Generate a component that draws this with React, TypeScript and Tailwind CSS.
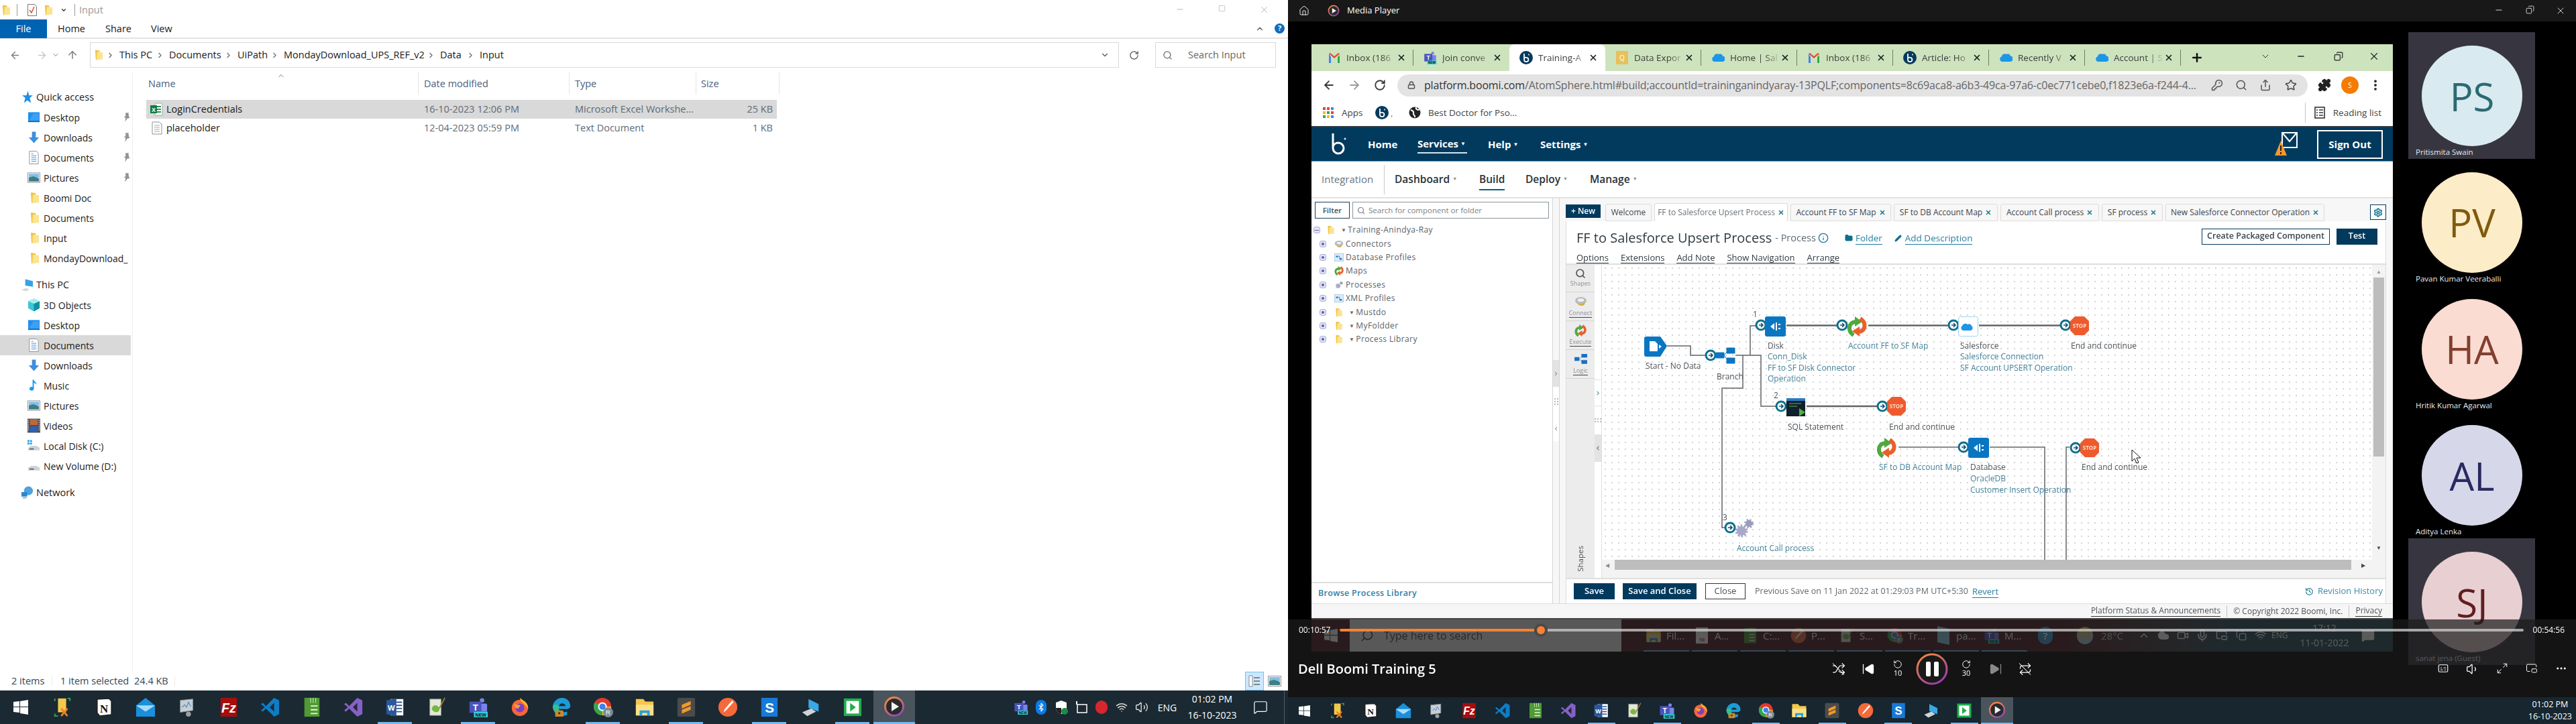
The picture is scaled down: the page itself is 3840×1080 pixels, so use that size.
import React from 'react';
import {
  ArrowLeft, ArrowRight, ArrowUp, Bluetooth, ChevronDown, ChevronLeft, ChevronRight, ChevronUp, Cloud, Copy, Ellipsis,
  EllipsisVertical, Folder, History, House, Info, KeyRound, Lock, Maximize2, MessageSquare, Mic, Minus, Pencil,
  PictureInPicture2, Plus, Puzzle, Repeat, RotateCcw, RotateCw, Search, Settings, Share, Shuffle, SkipBack, SkipForward,
  Square, Star, Subtitles, Video, Volume1, Volume2, Wifi, X,
} from 'lucide-react';

type IconProps = { className?: string };

/* ---------- shared little drawings ---------- */

const TreeFolder = ({ className }: IconProps) => (
  <svg viewBox="0 0 14 18" className={className}>
    <path d="M1 1 L8 2 V16 L2 17Z" fill="#f2c23e" />
    <path d="M4 4 L13 5 V16 L3 17Z" fill="#fbe391" />
  </svg>
);

const BoomiB = ({ className }: IconProps) => (
  <svg viewBox="0 0 20 20" className={className}>
    <circle cx="10" cy="10" r="10" fill="#033a5e" />
    <path d="M7 4v9a3.2 3.2 0 1 0 3.2-3.2A3.2 3.2 0 0 0 7 11" fill="none" stroke="#fff" strokeWidth="1.8" />
    <circle cx="14" cy="5.5" r="1" fill="#fff" />
  </svg>
);

const SfCloud = ({ className }: IconProps) => (
  <svg viewBox="0 0 20 16" className={className}>
    <path d="M5 14a4 4 0 0 1-1-7.8A4.5 4.5 0 0 1 11 3a4 4 0 0 1 6 2.4A4.3 4.3 0 0 1 16 14Z" fill="#1b96e8" />
  </svg>
);

const Gmail = ({ className }: IconProps) => (
  <svg viewBox="0 0 20 18" className={className}>
    <path d="M2 3v14h3V8z" fill="#3f83f0" />
    <path d="M15 8v9h3V3z" fill="#2fa853" />
    <path d="M2 3l8 7 8-7-2-1-6 5-6-5z" fill="#e84335" />
    <path d="M18 3l-3 5 3-2z" fill="#f7bb14" />
  </svg>
);

const MediaLogo = ({ className, id }: IconProps & { id: string }) => (
  <svg viewBox="0 0 32 32" className={className}>
    <defs>
      <linearGradient id={id} x1="0.2" y1="0" x2="0.8" y2="1">
        <stop offset="0" stopColor="#f5893a" />
        <stop offset="1" stopColor="#8b4bb8" />
      </linearGradient>
    </defs>
    <circle cx="16" cy="16" r="13.5" fill="#2a2a2e" stroke={`url(#${id})`} strokeWidth="3" />
    <path d="M12 9l11 7-11 7z" fill="#f2f2f2" />
  </svg>
);

/* swirl used for map shapes, drawn in a 30x30 box */
const MapNode = ({ x, y }: { x: number; y: number }) => (
  <g transform={`translate(${x} ${y})`}>
    <path d="M10 28C1 22 2 9 13 8" fill="none" stroke="#4fa83d" strokeWidth="6" />
    <path d="M12 0l11 8-11 7z" fill="#4fa83d" />
    <path d="M20 3c9 6 9 18-2 20" fill="none" stroke="#ea5f2b" strokeWidth="6" />
    <path d="M19 30L8 22l11-7z" fill="#ea5f2b" />
  </g>
);

const MapMini = ({ className }: IconProps) => (
  <svg viewBox="0 0 30 30" className={className}>
    <MapNode x={0} y={0} />
  </svg>
);

const PlugMini = ({ className }: IconProps) => (
  <svg viewBox="0 0 20 16" className={className}>
    <ellipse cx="10" cy="7" rx="9" ry="6" fill="#b8bcc0" />
    <path d="M4 9c3 5 9 5 13-1-1 6-2 7-6 7s-6-2-7-6z" fill="#d8ae3c" />
    <ellipse cx="10" cy="6" rx="5" ry="2.5" fill="#f0f0f0" />
  </svg>
);

const GearsMini = ({ className }: IconProps) => (
  <svg viewBox="0 0 20 16" className={className}>
    <circle cx="8" cy="10" r="4" fill="#a8a9c8" stroke="#a8a9c8" strokeWidth="3" strokeDasharray="1.6 1.2" />
    <circle cx="15" cy="4" r="2.5" fill="#9a9bbd" stroke="#9a9bbd" strokeWidth="2" strokeDasharray="1.3 1" />
  </svg>
);

const ProfileMini = ({ className }: IconProps) => (
  <svg viewBox="0 0 16 16" className={className}>
    <rect x="0.5" y="1.5" width="15" height="13" fill="#dcecf8" stroke="#a5c8e4" />
    <path d="M3 5h3v3H3zM9 9h4v3H9z" fill="#2f7fc0" />
    <path d="M6 6h3v4" fill="none" stroke="#2f7fc0" />
  </svg>
);

const LogicMini = ({ className }: IconProps) => (
  <svg viewBox="0 0 30 24" className={className}>
    <path d="M0 8h11v8H0zM17 0h13v8H17zM17 15h13v8H17zM11 12l7-7M11 12l7 7" fill="#1c6fc0" stroke="#1c6fc0" />
  </svg>
);

/* ---------- taskbar app icons, same order in both taskbars ---------- */

const appIcons: React.ReactNode[] = [
  <g key="db">
    <path d="M9 2h13v22H9z" fill="#f2c94c" />
    <path d="M4 26v4h5M28 6V2h-4M4 6V2" fill="none" stroke="#2fa84f" strokeWidth="2" />
    <path d="M14 30l10-12M24 30L14 18" stroke="#f08020" strokeWidth="3" />
  </g>,
  <g key="notion">
    <path d="M5 3l19-1 4 4v22l-19 2-4-5z" fill="#fff" stroke="#222" strokeWidth="2" />
    <text x="16" y="24" textAnchor="middle" fontSize="18" fontFamily="Liberation Serif" fontWeight="700" fill="#111">N</text>
  </g>,
  <g key="mail">
    <path d="M16 1L31 13v18H1V13z" fill="#1a8fdc" />
    <path d="M1 13h30L16 23z" fill="#a6def7" />
  </g>,
  <g key="perf">
    <path d="M5 5l20-2v18l-20 3z" fill="#c9ced3" stroke="#8b9096" />
    <path d="M8 16l4-4 3 4 3-8 4 7" fill="none" stroke="#4b90d0" strokeWidth="1.3" />
    <circle cx="18" cy="27" r="4" fill="#9aa0a6" />
  </g>,
  <g key="fz">
    <rect x="3" y="1" width="26" height="30" fill="#a80d0d" />
    <text x="16" y="24" textAnchor="middle" fontSize="21" fontFamily="Liberation Sans" fontStyle="italic" fontWeight="700" fill="#fff">Fz</text>
  </g>,
  <g key="vscode">
    <path d="M22 1l8 4v22l-8 4L9 18l-5 5-3-2 6-5-6-5 3-2 5 5z" fill="#0f7cc7" />
    <path d="M22 9l-7 7 7 7z" fill="#1f2b35" />
  </g>,
  <g key="note">
    <rect x="4" y="1" width="24" height="30" fill="#4f9a34" />
    <path d="M14 1v8M18 1v8M22 1v8" stroke="#dff0d0" />
    <path d="M14 14h11M14 20h11M14 26h11" stroke="#e8f5dc" strokeWidth="2" />
  </g>,
  <g key="vs">
    <path d="M22 1l8 4v22l-8 4L9 18l-5 5-3-2 6-5-6-5 3-2 5 5z" fill="#8661c5" />
    <path d="M22 9l-7 7 7 7z" fill="#1f2b35" />
  </g>,
  <g key="word">
    <rect x="9" y="3" width="20" height="26" fill="#fff" />
    <path d="M18 8h9M18 13h9M18 18h9M18 23h9" stroke="#2b579a" strokeWidth="2" />
    <path d="M2 5l16-3v28L2 27z" fill="#2b579a" />
    <text x="10" y="21" textAnchor="middle" fontSize="12" fontFamily="Liberation Sans" fontWeight="700" fill="#fff">W</text>
  </g>,
  <g key="npp">
    <path d="M5 3h18v26H5z" fill="#e3e8d8" stroke="#8a8f80" />
    <path d="M8 18c2-7 10-7 12 0s-10 8-12 0z" fill="#74b840" />
    <path d="M29 1L20 18" stroke="#a07830" strokeWidth="2" />
  </g>,
  <g key="teams">
    <circle cx="22" cy="5" r="3.5" fill="#7b83eb" />
    <rect x="18" y="10" width="12" height="13" rx="2" fill="#7b83eb" />
    <rect x="2" y="7" width="19" height="18" fill="#4b53bc" />
    <text x="11.5" y="21" textAnchor="middle" fontSize="14" fontFamily="Liberation Sans" fontWeight="700" fill="#fff">T</text>
    <rect x="9" y="23" width="22" height="9" fill="#35d0d6" />
    <text x="20" y="30.5" textAnchor="middle" fontSize="7.5" fontFamily="Liberation Sans" fontWeight="700" fill="#111">NEW</text>
  </g>,
  <g key="firefox">
    <circle cx="16" cy="17" r="13" fill="#f5663a" />
    <path d="M16 1c8 6 14 10 13 18-4-8-9-9-12-14z" fill="#fbb32e" />
    <circle cx="16" cy="17" r="7" fill="#7a3fc4" />
    <path d="M7 10c3 3 6 1 10 3l-4 5c-4 0-6-3-6-8z" fill="#f8a02c" />
  </g>,
  <g key="edge">
    <path d="M2 15C3 6 10 1 17 1c8 0 13 6 13 13 0 3-3 5-7 5H12c1 4 7 6 13 4v5c-9 4-22 1-23-13z" fill="#1d9bd6" />
    <path d="M12 14c1-5 8-6 11 0z" fill="#1f2b35" />
    <path d="M2 15c1 9 9 15 17 14-7-3-9-10-7-15-4-3-8-3-10 1z" fill="#30c48d" />
    <rect x="6" y="21" width="13" height="10" rx="1" fill="#c98a2b" />
    <rect x="11" y="24" width="3" height="3" fill="#3a2a10" />
  </g>,
  <g key="chrome">
    <circle cx="15" cy="15" r="14" fill="#e5382c" />
    <path d="M15 15L3 8A14 14 0 0 0 15 29z" fill="#2fa853" />
    <path d="M15 15h14A14 14 0 0 1 15 29z" fill="#fbc116" />
    <circle cx="15" cy="15" r="7" fill="#fff" />
    <circle cx="15" cy="15" r="5" fill="#3b82f0" />
    <circle cx="24" cy="24" r="8" fill="#7f8b93" />
    <text x="24" y="28" textAnchor="middle" fontSize="10" fontFamily="Liberation Sans" fill="#fff">R</text>
  </g>,
  <g key="explorer">
    <path d="M2 3h12l3 4h13v22H2z" fill="#f6c64a" />
    <path d="M2 12h28v17H2z" fill="#fbe08a" />
    <path d="M8 21h16v8h-4v-4h-8v4H8z" fill="#2b9fe0" />
  </g>,
  <g key="sublime">
    <rect x="2" y="1" width="28" height="30" rx="3" fill="#4b4b4b" />
    <path d="M23 6L9 12v6l14-6zM9 20l14-6v6L9 26z" fill="#f09a2a" />
  </g>,
  <g key="postman">
    <circle cx="16" cy="16" r="15" fill="#f5693a" />
    <path d="M23 5L11 19l2 2L25 8zM11 19l-2 5 4-3" fill="#fff" />
  </g>,
  <g key="snap">
    <rect x="3" y="1" width="26" height="30" fill="#1779d8" />
    <text x="16" y="24" textAnchor="middle" fontSize="22" fontFamily="Liberation Sans" fontWeight="700" fill="#fff">S</text>
  </g>,
  <g key="rdp">
    <path d="M12 3l16 8v12l-16-6z" fill="#38a9e6" />
    <path d="M2 24l14-6 8 5-14 7z" fill="#cfd3d6" />
  </g>,
  <g key="green">
    <rect x="2" y="2" width="28" height="28" fill="#1fae4b" />
    <rect x="6" y="6" width="20" height="20" fill="#fff" />
    <path d="M12 9l9 7-9 7z" fill="#1fae4b" />
  </g>,
];

/* window pane logo, then the apps above, then the media player */
const WinLogo = ({ className }: IconProps) => (
  <svg viewBox="0 0 22 22" className={className}>
    <path d="M0 3l9-1v8H0zM10 2l12-2v10H10zM0 11h9v8l-9-1zM10 11h12v11l-12-2z" fill="#fff" />
  </svg>
);

/* ---------- left half: file explorer ---------- */

const Pane = ({ color }: { color: string }) => (
  <svg viewBox="0 0 20 20" className="h-[20px] w-[20px]">
    <rect x="1" y="2" width="18" height="15" fill={color} />
    <path d="M3 15L9 4h9v11z" fill="#fff" opacity="0.15" />
    <rect x="1" y="16" width="18" height="1.5" fill="#0b5fa8" />
  </svg>
);
const DownArrow = () => (
  <svg viewBox="0 0 20 20" className="h-[20px] w-[20px]">
    <path d="M7 1h6v9h5l-8 9-8-9h5z" fill="#3d8fe0" />
  </svg>
);
const DocIcon = () => (
  <svg viewBox="0 0 20 20" className="h-[20px] w-[20px]">
    <path d="M3 0h11l3 3v17H3z" fill="#fff" stroke="#8d9299" />
    <path d="M6 4h3M6 7h8M6 10h8M6 13h8M6 16h8" stroke="#3d8fe0" />
  </svg>
);
const PicIcon = () => (
  <svg viewBox="0 0 20 20" className="h-[20px] w-[20px]">
    <rect x="0.5" y="2.5" width="19" height="15" fill="#fff" stroke="#8d9299" />
    <rect x="2" y="4" width="16" height="6" fill="#7fc0ea" />
    <path d="M2 10l7-2 9 3v5H2z" fill="#3f7d80" />
  </svg>
);
const CubeIcon = () => (
  <svg viewBox="0 0 20 20" className="h-[20px] w-[20px]">
    <path d="M10 0l9 4v11l-9 5-9-5V4z" fill="#39c6d6" />
    <path d="M10 8l9-4v11l-9 5z" fill="#0f8fa5" />
    <path d="M10 0l9 4-9 4-9-4z" fill="#a6edf0" />
  </svg>
);
const NoteIcon = () => (
  <svg viewBox="0 0 20 20" className="h-[20px] w-[20px]">
    <path d="M10 1v14a3.5 3 0 1 1-2-2.6V1h2c0 3 5 4 4 8-1-2-2-3-4-3z" fill="#1a9be8" />
  </svg>
);
const FilmIcon = () => (
  <svg viewBox="0 0 20 22" className="h-[22px] w-[20px]">
    <rect width="20" height="22" fill="#4b4f55" />
    <rect x="4" y="1" width="12" height="9" fill="#c0683a" />
    <rect x="4" y="12" width="12" height="9" fill="#3060b0" />
    <path d="M1.5 2v18M18.5 2v18" stroke="#ddd" strokeWidth="1.5" strokeDasharray="1.5 1.5" />
  </svg>
);
const DiskIcon = ({ win }: { win?: boolean }) => (
  <svg viewBox="0 0 20 20" className="h-[20px] w-[20px]">
    <path d="M1 13l5-3h8l5 3v4H1z" fill="#cfd2d5" />
    <rect x="3" y="14" width="7" height="2" fill="#666" />
    {win && <path d="M0 1h3v3H0zM4 1h3v3H4zM0 5h3v3H0zM4 5h3v3H4z" fill="#1da1f2" />}
  </svg>
);
const PcIcon = () => (
  <svg viewBox="0 0 20 20" className="h-[20px] w-[20px]">
    <path d="M7 1l12 3v9L7 11z" fill="#39a2e6" />
    <path d="M1 18l7-3 6 2-6 3z" fill="#d5d8db" />
  </svg>
);
const NetIcon = () => (
  <svg viewBox="0 0 20 20" className="h-[20px] w-[20px]">
    <circle cx="12" cy="7" r="7" fill="#4da3de" />
    <rect x="1" y="9" width="9" height="7" fill="#2c86cf" />
    <path d="M3 18h6" stroke="#9aa" strokeWidth="2" />
  </svg>
);
const StarIcon = () => (
  <svg viewBox="0 0 20 20" className="h-[20px] w-[20px]">
    <path d="M11 0l2 7h6l-5 4 2 8-6-4-5 4 2-8-5-4h7z" fill="#1f8fe8" />
  </svg>
);

type NavRow = { label: string; icon: React.ReactNode; pin?: boolean; selected?: boolean };

const folderIcon = <TreeFolder className="ml-[3px] h-[18px] w-[14px]" />;

const quickAccess: NavRow[] = [
  { label: 'Desktop', icon: <Pane color="#1e90f0" />, pin: true },
  { label: 'Downloads', icon: <DownArrow />, pin: true },
  { label: 'Documents', icon: <DocIcon />, pin: true },
  { label: 'Pictures', icon: <PicIcon />, pin: true },
  { label: 'Boomi Doc', icon: folderIcon },
  { label: 'Documents', icon: folderIcon },
  { label: 'Input', icon: folderIcon },
  { label: 'MondayDownload_', icon: folderIcon },
];

const thisPc: NavRow[] = [
  { label: '3D Objects', icon: <CubeIcon /> },
  { label: 'Desktop', icon: <Pane color="#1e90f0" /> },
  { label: 'Documents', icon: <DocIcon />, selected: true },
  { label: 'Downloads', icon: <DownArrow /> },
  { label: 'Music', icon: <NoteIcon /> },
  { label: 'Pictures', icon: <PicIcon /> },
  { label: 'Videos', icon: <FilmIcon /> },
  { label: 'Local Disk (C:)', icon: <DiskIcon win /> },
  { label: 'New Volume (D:)', icon: <DiskIcon /> },
];

const NavParent = ({ label, icon }: { label: string; icon: React.ReactNode }) => (
  <div className="flex h-[30px] items-center pl-[31px]">
    <span className="mr-[4px] flex w-[19px] justify-center">{icon}</span>
    <span>{label}</span>
  </div>
);

const NavChild = ({ row }: { row: NavRow }) => (
  <div className={`flex h-[30px] w-[195px] items-center pl-[41px] ${row.selected ? 'bg-[#d9d9d9]' : ''}`}>
    <span className="mr-[5px] flex w-[19px] justify-center">{row.icon}</span>
    <span className="w-[130px] whitespace-nowrap text-[14px]">{row.label}</span>
    {row.pin && (
      <svg viewBox="0 0 14 18" className="ml-[-9px] h-[16px] w-[12px]">
        <path d="M5 1h6l-1 1 1 6 2 2-5 1-4 6 1-7-3-2 3-1z" fill="#8e949a" />
      </svg>
    )}
  </div>
);

const crumbs = [
  { label: 'This PC', cls: 'w-[74px]' },
  { label: 'Documents', cls: 'w-[102px]' },
  { label: 'UiPath', cls: 'w-[69px]' },
  { label: 'MondayDownload_UPS_REF_v2', cls: 'w-[233px]' },
  { label: 'Data', cls: 'w-[59px]' },
  { label: 'Input', cls: '' },
];

const Explorer = () => (
  <div className="flex h-[1080px] w-[1920px] flex-col bg-white font-['Open_Sans',sans-serif] text-[14.5px] text-[#1a1a1a]">
    {/* quick access toolbar */}
    <div className="flex h-[29px] items-center pl-[3px]">
      <TreeFolder className="h-[18px] w-[13px]" />
      <span className="ml-[9px] h-[18px] w-px bg-[#9a9a9a]" />
      <svg viewBox="0 0 14 18" className="ml-[15px] h-[18px] w-[14px]">
        <path d="M0.5 0.5h10l3 3v14H.5z" fill="#fff" stroke="#777" />
        <path d="M3 9l3 4 4-9" fill="none" stroke="#e2401f" strokeWidth="1.4" />
      </svg>
      <TreeFolder className="ml-[11px] h-[18px] w-[13px]" />
      <ChevronDown size={10} className="ml-[11px] text-[#333]" strokeWidth={3} />
      <span className="ml-[11px] h-[18px] w-px bg-[#9a9a9a]" />
      <span className="ml-[6px] text-[#9a9a9a]">Input</span>
      <div className="ml-auto flex pr-[4px] text-[#9a9a9a]">
        <span className="flex w-[63px] justify-center"><Minus size={14} strokeWidth={1.2} /></span>
        <span className="flex w-[63px] justify-center"><Square size={11} strokeWidth={1.2} /></span>
        <span className="flex w-[63px] justify-center"><X size={15} strokeWidth={1.2} /></span>
      </div>
    </div>

    {/* ribbon tabs */}
    <div className="flex h-[29px] items-center border-b-2 border-[#e3e3e3]">
      <div className="flex h-[28px] w-[70px] items-center justify-center bg-[#0063b1] text-white">File</div>
      <span className="ml-[16px] w-[71px]">Home</span>
      <span className="w-[68px]">Share</span>
      <span>View</span>
      <ChevronUp size={14} className="ml-auto text-[#555]" />
      <span className="ml-[15px] mr-[5px] flex h-[15px] w-[15px] items-center justify-center rounded-full bg-[#0f6cbd] text-[11px] font-bold text-white">?</span>
    </div>

    {/* address row */}
    <div className="flex h-[50px] items-start pt-[5px]">
      <div className="flex h-[38px] w-[134px] items-center pl-[14px] text-[#7c7c7c]">
        <ArrowLeft size={17} />
        <ArrowRight size={17} className="ml-[23px] text-[#c8c8c8]" />
        <ChevronDown size={12} className="ml-[6px]" />
        <ArrowUp size={18} className="ml-[10px]" />
      </div>
      <div className="flex h-[38px] w-[1534px] items-center border border-[#d9d9d9] pl-[6px]">
        <TreeFolder className="h-[18px] w-[13px]" />
        <ChevronRight size={13} className="ml-[4px] mr-[7px] text-[#666]" />
        {crumbs.map((c) => (
          <span key={c.label} className={`flex items-center whitespace-nowrap ${c.cls}`}>
            <span className="flex-1">{c.label}</span>
            {c.cls && <ChevronRight size={13} className="mr-[7px] text-[#666]" />}
          </span>
        ))}
        <ChevronDown size={14} className="ml-auto mr-[13px] text-[#555]" />
      </div>
      <div className="flex h-[38px] w-[44px] items-center justify-center">
        <RotateCw size={15} className="text-[#555]" />
      </div>
      <div className="ml-[10px] flex h-[38px] w-[180px] items-center border border-[#d9d9d9] pl-[10px] text-[#666]">
        <Search size={15} className="mr-[23px]" />
        <span>Search Input</span>
      </div>
    </div>

    {/* nav pane and file list */}
    <div className="flex flex-1">
      <div className="w-[198px] border-r border-[#efefef] pt-[22px]">
        <NavParent label="Quick access" icon={<StarIcon />} />
        {quickAccess.map((r, i) => (
          <NavChild key={i} row={r} />
        ))}
        <div className="h-[10px]" />
        <NavParent label="This PC" icon={<PcIcon />} />
        {thisPc.map((r, i) => (
          <NavChild key={i} row={r} />
        ))}
        <div className="h-[10px]" />
        <NavParent label="Network" icon={<NetIcon />} />
      </div>

      <div className="flex-1 pl-[20px]">
        <div className="relative flex h-[33px] items-center text-[#4c607a]">
          <ChevronUp size={12} className="absolute left-[195px] top-[-1px] text-[#777]" />
          <span className="flex h-full w-[406px] items-center border-r border-[#e5e5e5] pl-[3px]">Name</span>
          <span className="flex h-full w-[225px] items-center border-r border-[#e5e5e5] pl-[8px]">Date modified</span>
          <span className="flex h-full w-[189px] items-center border-r border-[#e5e5e5] pl-[8px]">Type</span>
          <span className="flex h-full w-[124px] items-center border-r border-[#e5e5e5] pl-[7px]">Size</span>
        </div>
        <div className="mt-[8px] flex h-[28px] w-[940px] items-center bg-[#d9d9d9]">
          <svg viewBox="0 0 20 20" className="ml-[5px] mr-[5px] h-[20px] w-[20px]">
            <path d="M8 1h9l2 2v16H8z" fill="#fff" stroke="#9aa" />
            <path d="M10 6h7M10 10h7M10 14h7" stroke="#2f8f55" strokeWidth="2" />
            <rect x="1" y="4" width="10" height="12" fill="#107c41" />
            <text x="6" y="13.5" textAnchor="middle" fontSize="9" fontFamily="Liberation Sans" fontWeight="700" fill="#fff">X</text>
          </svg>
          <span className="w-[384px]">LoginCredentials</span>
          <span className="w-[225px] text-[#5f6a75]">16-10-2023 12:06 PM</span>
          <span className="w-[190px] whitespace-nowrap text-[#5f6a75]">Microsoft Excel Workshe...</span>
          <span className="flex-1 pr-[6px] text-right text-[#5f6a75]">25 KB</span>
        </div>
        <div className="flex h-[27px] w-[940px] items-center">
          <svg viewBox="0 0 16 20" className="ml-[8px] mr-[6px] h-[20px] w-[16px]">
            <path d="M1 1h10l4 3v15H1z" fill="#fff" stroke="#8d9299" />
            <path d="M4 6h8M4 9h8M4 12h8M4 15h8" stroke="#a5a9ad" />
          </svg>
          <span className="w-[384px]">placeholder</span>
          <span className="w-[225px] text-[#5f6a75]">12-04-2023 05:59 PM</span>
          <span className="w-[190px] text-[#5f6a75]">Text Document</span>
          <span className="flex-1 pr-[6px] text-right text-[#5f6a75]">1 KB</span>
        </div>
      </div>
    </div>

    {/* status bar */}
    <div className="flex h-[28px] items-center pl-[17px] pr-[10px] text-[#33475b]">
      <span className="w-[60px]">2 items</span>
      <span className="h-[16px] w-px bg-[#ececec]" />
      <span className="ml-[12px] w-[110px]">1 item selected</span>
      <span className="w-[60px]">24.4 KB</span>
      <span className="h-[16px] w-px bg-[#ececec]" />
      <div className="ml-auto flex h-[28px] w-[28px] items-center justify-center border border-[#7cc0eb] bg-[#cce8ff]">
        <svg viewBox="0 0 20 20" className="h-[20px] w-[20px]">
          <path d="M2 2h5v16H2z" fill="#fff" stroke="#888" />
          <path d="M9 5h9M9 10h9M9 15h9" stroke="#666" strokeWidth="1.5" />
        </svg>
      </div>
      <div className="ml-[6px] flex h-[28px] items-center pr-[0px]">
        <PicIcon />
      </div>
    </div>

    <Taskbar />
  </div>
);

/* ---------- taskbars ---------- */

const activeApps = [8, 10, 13, 15, 17, 19, 20];

const Taskbar = () => (
  <div className="flex h-[50px] items-center bg-[#1b2933] text-white">
    <div className="flex h-full w-[62px] items-center justify-center">
      <WinLogo className="h-[22px] w-[22px]" />
    </div>
    {appIcons.map((icon, i) => (
      <div key={i} className="relative flex h-full w-[62px] items-center justify-center">
        <svg viewBox="0 0 32 32" className="h-[30px] w-[30px]">
          {icon}
        </svg>
        {activeApps.includes(i) && i !== 20 && <span className="absolute bottom-0 left-[5px] h-[3px] w-[51px] bg-[#76b9ed]" />}
      </div>
    ))}
    <div className="flex h-full w-[62px] items-center justify-center border-b-[3px] border-[#76b9ed] bg-[#4a545c]">
      <MediaLogo id="tb-a" className="h-[32px] w-[32px]" />
    </div>

    <div className="ml-[143px] flex w-[30px] justify-center">
      <svg viewBox="0 0 32 32" className="h-[22px] w-[22px]">{appIcons[10]}</svg>
    </div>
    <div className="flex w-[30px] justify-center">
      <span className="flex h-[22px] w-[16px] items-center justify-center rounded-full bg-[#0a7ce8]">
        <Bluetooth size={14} />
      </span>
    </div>
    <div className="flex w-[30px] justify-center">
      <svg viewBox="0 0 20 22" className="h-[22px] w-[20px]">
        <path d="M10 1l8 3v8c0 5-4 8-8 9-4-1-8-4-8-9V4z" fill="#fff" />
        <path d="M10 1v20c-4-1-8-4-8-9h8V4z" fill="#222" />
        <circle cx="15" cy="17" r="5" fill="#1d8a4a" />
      </svg>
    </div>
    <div className="flex w-[30px] justify-center">
      <svg viewBox="0 0 20 20" className="h-[20px] w-[20px]">
        <rect x="4" y="6" width="14" height="12" fill="none" stroke="#fff" strokeWidth="1.5" />
        <path d="M3 1v5" stroke="#fff" strokeWidth="2" />
      </svg>
    </div>
    <div className="flex w-[30px] justify-center">
      <span className="h-[20px] w-[18px] rounded-full bg-[#d8262e]" />
    </div>
    <div className="flex w-[30px] justify-center">
      <Wifi size={18} className="text-[#ddd]" />
    </div>
    <div className="flex w-[30px] justify-center">
      <Volume2 size={20} strokeWidth={1.4} />
    </div>
    <div className="w-[46px] text-center font-['Open_Sans',sans-serif] text-[14px]">ENG</div>
    <div className="w-[88px] text-center font-['Open_Sans',sans-serif] text-[14px] leading-[24px]">
      <div>01:02 PM</div>
      <div>16-10-2023</div>
    </div>
    <div className="flex w-[56px] justify-center">
      <MessageSquare size={22} strokeWidth={1.3} />
    </div>
    <span className="ml-[7px] h-full w-px bg-[#4f5a63]" />
  </div>
);

const PlayerTaskbar = () => (
  <div className="flex h-[40px] items-center bg-[#17262f] text-white">
    <div className="flex h-full w-[49px] items-center justify-center">
      <WinLogo className="h-[17px] w-[17px]" />
    </div>
    {appIcons.map((icon, i) => (
      <div key={i} className="relative flex h-full w-[49.2px] items-center justify-center">
        <svg viewBox="0 0 32 32" className="h-[24px] w-[24px]">
          {icon}
        </svg>
        {activeApps.includes(i) && <span className="absolute bottom-0 left-[4px] h-[2px] w-[41px] bg-[#76b9ed]" />}
      </div>
    ))}
    <div className="flex h-full w-[48px] items-center justify-center border-b-2 border-[#76b9ed] bg-[#4a545c]">
      <MediaLogo id="tb-b" className="h-[26px] w-[26px]" />
    </div>
    <div className="ml-auto pr-[6px] text-center font-['Open_Sans',sans-serif] text-[12.5px] leading-[18px]">
      <div>01:02 PM</div>
      <div>16-10-2023</div>
    </div>
  </div>
);

/* ---------- the Boomi page inside the video ---------- */

const chromeTabs = [
  { title: 'Inbox (186', icon: <Gmail className="h-[18px] w-[20px]" /> },
  { title: 'Join conve', icon: <svg viewBox="0 0 32 32" className="h-[20px] w-[20px]">{appIcons[10]}</svg> },
  { title: 'Training-A', icon: <BoomiB className="h-[20px] w-[20px]" />, active: true },
  { title: 'Data Expor', icon: <span className="flex h-[20px] w-[18px] items-center justify-center bg-[#e8c05c] text-[10px] text-white">Q</span> },
  { title: 'Home | Sal', icon: <SfCloud className="h-[18px] w-[20px]" /> },
  { title: 'Inbox (186', icon: <Gmail className="h-[18px] w-[20px]" /> },
  { title: 'Article: Ho', icon: <BoomiB className="h-[20px] w-[20px]" /> },
  { title: 'Recently V', icon: <SfCloud className="h-[18px] w-[20px]" /> },
  { title: 'Account | S', icon: <SfCloud className="h-[18px] w-[20px]" /> },
];

const ChromeBar = () => (
  <div className="flex h-[40px] items-stretch bg-[#cde3bd] pl-[9px] text-[13.5px] text-[#3c3c3c]">
    {chromeTabs.map((t, i) => (
      <div
        key={i}
        className={`flex w-[143px] items-center pl-[15px] ${t.active ? 'rounded-t-lg bg-white' : ''}`}
      >
        <span className="flex w-[20px] justify-center">{t.icon}</span>
        <span className="ml-[8px] w-[75px] whitespace-nowrap [mask-image:linear-gradient(to_right,black_70%,transparent)]">
          {t.title}
        </span>
        <X size={14} strokeWidth={3} className="text-[#222]" />
        {!t.active && i !== 1 && <span className="ml-auto h-[24px] w-px bg-[#6e7d65]" />}
      </div>
    ))}
    <Plus size={20} strokeWidth={3} className="ml-[14px] self-center text-[#111]" />
    <ChevronDown size={16} strokeWidth={1.5} className="ml-[84px] mb-[4px] self-center text-[#333]" />
    <Minus size={14} strokeWidth={2.5} className="ml-[38px] mb-[4px] self-center text-[#222]" />
    <Copy size={14} strokeWidth={2} className="ml-[42px] mb-[4px] self-center -scale-x-100 text-[#222]" />
    <X size={18} strokeWidth={1.5} className="ml-[37px] mb-[4px] self-center text-[#222]" />
  </div>
);

const ChromeToolbar = () => (
  <div className="flex h-[42px] items-center bg-white pl-[7px] text-[#3a3a3a]">
    <span className="flex w-[38px] justify-center"><ArrowLeft size={20} strokeWidth={2.2} /></span>
    <span className="flex w-[38px] justify-center text-[#9a9a9a]"><ArrowRight size={20} strokeWidth={2.2} /></span>
    <span className="flex w-[37px] justify-center"><RotateCw size={18} strokeWidth={2.4} /></span>
    <div className="ml-[8px] flex h-[33px] w-[1357px] items-center rounded-full bg-[#e3e3e3] pl-[15px]">
      <Lock size={12} strokeWidth={3} className="text-[#555]" />
      <span className="ml-[13px] w-[1157px] whitespace-nowrap text-[16px] tracking-[-0.18px]">
        <span className="text-[#333]">platform.boomi.com</span>
        <span className="text-[#666]">/AtomSphere.html#build;accountId=traininganindyaray-13PQLF;components=8c69aca8-a6b3-49ca-97a6-c0ec771cebe0,f1823e6a-f244-4...</span>
      </span>
      <KeyRound size={18} className="ml-[16px] text-[#555]" />
      <Search size={18} className="ml-[18px] text-[#555]" />
      <Share size={18} className="ml-[18px] text-[#555]" />
      <Star size={18} className="ml-[20px] text-[#444]" />
    </div>
    <Puzzle size={20} fill="#222" className="ml-[15px] text-[#222]" />
    <span className="ml-[15px] flex h-[26px] w-[26px] items-center justify-center rounded-full bg-[#f57c00] text-[10px] text-white">S</span>
    <EllipsisVertical size={20} strokeWidth={2.6} className="ml-[15px] text-[#222]" />
  </div>
);

const BookmarkBar = () => (
  <div className="flex h-[40px] items-center bg-white pl-[17px] pr-[17px] text-[13.5px] text-[#444]">
    <div className="grid h-[16px] w-[16px] grid-cols-3 gap-[2px]">
      {['#e94235', '#e94235', '#4285f4', '#fbbc05', '#34a853', '#e94235', '#34a853', '#fbbc05', '#4285f4'].map((c, i) => (
        <span key={i} style={{ backgroundColor: c }} />
      ))}
    </div>
    <span className="ml-[12px] w-[50px]">Apps</span>
    <BoomiB className="h-[20px] w-[20px]" />
    <span className="ml-[3px] w-[27px] text-[#888]">,</span>
    <svg viewBox="0 0 18 18" className="h-[18px] w-[18px]">
      <circle cx="9" cy="9" r="8.5" fill="#222" />
      <path d="M3 5c3 1 5 2 4 5s3 2 2 6M11 1c-1 3 2 4 5 4" fill="none" stroke="#fff" strokeWidth="2" />
    </svg>
    <span className="ml-[11px]">Best Doctor for Pso...</span>
    <span className="ml-auto h-[30px] w-px bg-[#c5c5c5]" />
    <svg viewBox="0 0 16 18" className="ml-[13px] h-[18px] w-[16px]">
      <rect x="1" y="1" width="14" height="16" fill="none" stroke="#333" strokeWidth="1.6" />
      <path d="M3 5h2M7 5h6M3 9h2M7 9h6M3 13h2M7 13h6" stroke="#333" strokeWidth="1.4" />
    </svg>
    <span className="ml-[12px]">Reading list</span>
  </div>
);

const BoomiNav = () => (
  <div className="flex h-[53px] items-center border-t-2 border-b border-t-[#2e3c46] border-b-[#4aa6d6] bg-[#023a5e] pl-[27px] pr-[15px] text-[15px] font-bold text-white">
    <svg viewBox="0 0 26 34" className="mr-[31px] h-[34px] w-[26px]">
      <path d="M5 1v22a8 8 0 1 0 8-8 8 8 0 0 0-8 6" fill="none" stroke="#fff" strokeWidth="3" />
      <circle cx="23" cy="9" r="1.5" fill="#e8e8e8" />
    </svg>
    <span className="w-[74px]">Home</span>
    <span className="w-[105px]">
      <span className="flex h-[28px] w-[74px] items-center gap-[3px] border-b-2 border-[#cfe6f2]">
        Services <span className="text-[8px]">▼</span>
      </span>
    </span>
    <span className="flex w-[78px] items-center gap-[3px]">
      Help <span className="text-[8px]">▼</span>
    </span>
    <span className="flex items-center gap-[3px]">
      Settings <span className="text-[8px]">▼</span>
    </span>
    <svg viewBox="0 0 34 46" className="ml-auto h-[46px] w-[34px]">
      <rect x="11" y="6" width="22" height="22" fill="none" stroke="#fff" strokeWidth="2" />
      <path d="M12 7l10 12L32 7" fill="none" stroke="#fff" strokeWidth="2" />
      <path d="M9 18L18 40H0z" fill="#f2982e" />
      <rect x="8" y="25" width="2" height="8" fill="#222" />
      <rect x="8" y="35" width="2" height="3" fill="#222" />
    </svg>
    <div className="ml-[29px] flex h-[43px] w-[98px] items-center justify-center border-2 border-white">Sign Out</div>
  </div>
);

const SubNav = () => (
  <div className="flex h-[53px] items-center bg-white pl-[15px] text-[15.5px] font-semibold text-[#26323a]">
    <span className="w-[93px] text-[15px] font-normal text-[#6b7680]">Integration</span>
    <span className="mr-[15px] h-[44px] w-px bg-[#c9c9c9]" />
    <span className="flex w-[126px] items-center gap-[4px]">
      Dashboard <span className="text-[7px] text-[#888]">▼</span>
    </span>
    <span className="w-[69px]">
      <span className="border-b-2 border-[#0b5c80] pb-[4px]">Build</span>
    </span>
    <span className="flex w-[96px] items-center gap-[4px]">
      Deploy <span className="text-[7px] text-[#888]">▼</span>
    </span>
    <span className="flex items-center gap-[4px]">
      Manage <span className="text-[7px] text-[#888]">▼</span>
    </span>
  </div>
);

const treeRows = [
  { label: 'Connectors', icon: <PlugMini className="h-[12px] w-[15px]" />, folder: false },
  { label: 'Database Profiles', icon: <ProfileMini className="h-[14px] w-[14px]" />, folder: false },
  { label: 'Maps', icon: <MapMini className="h-[14px] w-[14px]" />, folder: false },
  { label: 'Processes', icon: <GearsMini className="h-[12px] w-[15px]" />, folder: false },
  { label: 'XML Profiles', icon: <ProfileMini className="h-[14px] w-[14px]" />, folder: false },
  { label: 'Mustdo', folder: true },
  { label: 'MyFoldder', folder: true },
  { label: 'Process Library', folder: true },
];

const Expander = ({ open }: { open?: boolean }) => (
  <span className="flex h-[10px] w-[10px] items-center justify-center rounded-[3px] border border-[#a9acd8] bg-[#e4e5f6]">
    {open ? <span className="h-px w-[6px] bg-[#5a5fb0]" /> : <span className="h-[4px] w-[4px] rounded-full bg-[#5a5fb0]" />}
  </span>
);

const Caret = () => <span className="ml-[8px] text-[8px] text-[#666]">▼</span>;

const ComponentTree = () => (
  <div className="flex w-[359px] flex-col bg-white">
    <div className="flex gap-[4px] pl-[5px] pt-[5px]">
      <div className="flex h-[25px] w-[52px] items-center justify-center border border-[#1d3f58] text-[11.5px] font-semibold text-[#44505a]">Filter</div>
      <div className="flex h-[25px] w-[293px] items-center border border-[#8b959d] pl-[6px] text-[11.5px] text-[#7b7f84]">
        <Search size={12} className="mr-[5px]" strokeWidth={2.4} />
        Search for component or folder
      </div>
    </div>
    <div className="flex-1 pt-[7px] text-[12px] tracking-[0.4px] text-[#5a6168]">
      <div className="flex h-[20.4px] items-center pl-[3px]">
        <Expander open />
        <TreeFolder className="ml-[9px] h-[14px] w-[14px]" />
        <Caret />
        <span className="ml-[2px]">Training-Anindya-Ray</span>
      </div>
      {treeRows.map((r) => (
        <div key={r.label} className="flex h-[20.4px] items-center pl-[12px]">
          <Expander />
          <span className="ml-[12px] flex w-[14px] justify-center">
            {r.folder ? <TreeFolder className="h-[14px] w-[14px]" /> : r.icon}
          </span>
          {r.folder && <Caret />}
          <span className={r.folder ? 'ml-[2px]' : 'ml-[3px]'}>{r.label}</span>
        </div>
      ))}
    </div>
    <div className="flex h-[32px] items-center border-t-2 border-[#dedede] pl-[10px] text-[12.5px] font-semibold tracking-[0.3px] text-[#2f7fa5]">
      Browse Process Library
    </div>
  </div>
);

const Grip = ({ cls }: { cls: string }) => (
  <div className={`flex flex-wrap content-center justify-center gap-[2px] ${cls}`}>
    {[0, 1, 2, 3, 4, 5].map((i) => (
      <span key={i} className="h-[2px] w-[2px] bg-[#bbb]" />
    ))}
  </div>
);

const SideStrip = () => (
  <div className="flex w-[11px] flex-col border-x border-[#d5d5d5] bg-[#f7f7f7] pt-[241px]">
    <div className="flex h-[40px] items-center justify-center bg-[#e3e3e3] text-[#555]">
      <ChevronRight size={11} strokeWidth={2.5} />
    </div>
    <Grip cls="h-[43px] bg-white" />
    <div className="flex h-[38px] items-center justify-center bg-white text-[#1f7a99]">
      <ChevronLeft size={11} strokeWidth={2.5} />
    </div>
  </div>
);

const buildTabs = [
  { label: 'Welcome', cls: 'w-[69px]' },
  { label: 'FF to Salesforce Upsert Process', cls: 'w-[199px]', close: true, active: true },
  { label: 'Account FF to SF Map', cls: 'w-[150px]', close: true },
  { label: 'SF to DB Account Map', cls: 'w-[155px]', close: true },
  { label: 'Account Call process', cls: 'w-[147px]', close: true },
  { label: 'SF process', cls: 'w-[91px]', close: true },
  { label: 'New Salesforce Connector Operation', cls: 'w-[237px]', close: true },
];

const BuildTabs = () => (
  <div className="flex h-[34px] items-end gap-[4px] pt-[8px] text-[12px] text-[#3c444b]">
    <div className="mb-[5px] mr-[3px] flex h-[20px] w-[52px] items-center justify-center gap-[2px] bg-[#023a5e] font-semibold text-white">
      + New
    </div>
    {buildTabs.map((t) => (
      <div
        key={t.label}
        className={`flex items-center justify-center gap-[4px] whitespace-nowrap rounded-t-[3px] border border-[#dcdcdc] ${t.cls} ${
          t.active ? 'h-[27px] border-b-0 bg-white text-[#6a7278]' : 'h-[26px] bg-[#f7f7f7]'
        }`}
      >
        {t.label}
        {t.close && <X size={10} strokeWidth={4} className="text-[#1f7a99]" />}
      </div>
    ))}
    <div className="mb-[2px] ml-auto flex h-[23px] w-[24px] items-center justify-center border border-[#023a5e] bg-white">
      <Settings size={14} strokeWidth={3} className="text-[#1f7a99]" />
    </div>
  </div>
);

const paletteItems = [
  { label: 'Connect', icon: <PlugMini className="h-[15px] w-[19px]" /> },
  { label: 'Execute', icon: <MapMini className="h-[18px] w-[18px]" /> },
  { label: 'Logic', icon: <LogicMini className="h-[15px] w-[19px]" /> },
];

const Palette = () => (
  <div className="flex w-[42px] flex-col bg-[#ececec] text-[9px] text-[#8a8f94]">
    <div className="flex h-[41px] flex-col items-center justify-center border-b border-[#d5d5d5]">
      <Search size={16} strokeWidth={2.5} className="text-[#555]" />
      Shapes
    </div>
    {paletteItems.map((p) => (
      <div key={p.label} className="flex h-[43px] flex-col items-center justify-center border-b border-[#d5d5d5]">
        <span className="mb-[2px] flex h-[18px] items-center">{p.icon}</span>
        <span className="border-b border-[#444] leading-[12px]">{p.label}</span>
      </div>
    ))}
    <span className="mb-[9px] mt-auto rotate-180 self-center text-[11.5px] text-[#555] [writing-mode:vertical-rl]">Shapes</span>
  </div>
);

const CanvasStrip = () => (
  <div className="flex w-[11px] flex-col border-r border-[#e0e0e0] bg-white pt-[171px]">
    <div className="flex h-[40px] items-center justify-center border-y border-[#e0e0e0] text-[#1f7a99]">
      <ChevronRight size={11} strokeWidth={2.5} />
    </div>
    <Grip cls="h-[42px]" />
    <div className="flex h-[41px] items-center justify-center bg-[#e3e3e3] text-[#555]">
      <ChevronLeft size={11} strokeWidth={2.5} />
    </div>
  </div>
);

/* ---------- process diagram, svg in page coordinates ---------- */

const Port = ({ x, y }: { x: number; y: number }) => (
  <g>
    <circle cx={x} cy={y} r="7" fill="#fff" stroke="#0d6f8c" strokeWidth="3" />
    <path d={`M${x - 3} ${y}h5M${x} ${y - 3}l3 3-3 3`} fill="none" stroke="#0d4f6c" strokeWidth="1.6" />
  </g>
);

const DiskNode = ({ x, y }: { x: number; y: number }) => (
  <g>
    <rect x={x} y={y} width="31" height="30" rx="3" fill="#0a76c2" />
    <path d={`M${x + 8} ${y + 15}l6-5v10zM${x + 16} ${y + 9}h2v12h-2zM${x + 20} ${y + 11}h3v2h-3zM${x + 20} ${y + 17}h3v2h-3z`} fill="#fff" />
  </g>
);

const StopNode = ({ cx, cy }: { cx: number; cy: number }) => (
  <g>
    <path
      d={`M${cx - 7} ${cy - 14}h14l7 7v14l-7 7h-14l-7-7v-14z`}
      fill="#ef5a2c"
    />
    <text x={cx} y={cy + 3} textAnchor="middle" fontSize="8" fontWeight="700" fontFamily="Open Sans" fill="#ffd9c9">STOP</text>
  </g>
);

const Diagram = () => (
  <svg viewBox="2388 396 1148 440" className="absolute inset-0 h-[440px] w-[1148px]">
    <g fill="none" stroke="#5f6468" strokeWidth="1.5">
      <path d="M2485 517H2520V531H2542" />
      <path d="M2587 531H2625V607H2648" />
      <path d="M2609 531V487H2618" />
      <path d="M2598 531V580H2567V788H2572" />
      <path d="M2830 668H2920" />
      <path d="M2966 668H3048V836" />
      <path d="M3085 668H3080V836" />
      <g strokeWidth="2.5">
        <path d="M2663 486.5H2739" />
        <path d="M2785 486.5H2905" />
        <path d="M2950 486.5H3071" />
        <path d="M2693 607H2798" />
      </g>
    </g>

    {/* start */}
    <path d="M2454 503h21l10 14-10 16h-21a3 3 0 0 1-3-3v-24a3 3 0 0 1 3-3z" fill="#0a76c2" />
    <path d="M2459 510h8l4 4v11h-12z" fill="#fff" />
    <path d="M2473 515l4 3-4 3z" fill="#fff" />

    {/* branch */}
    <Port x={2550} y={531} />
    <path d="M2558 527h12v8h-12zM2574 520h12v8h-12zM2574 535h12v8h-12zM2570 531l5-6M2570 531l5 7" fill="#0a76c2" stroke="#0a76c2" />

    <Port x={2625} y={486} />
    <DiskNode x={2631} y={473} />
    <Port x={2746} y={486} />
    <MapNode x={2753} y={473} />
    <Port x={2912} y={486} />
    <rect x="2919.5" y="473.5" width="29" height="29" rx="3" fill="#fff" stroke="#9fd4f0" />
    <path d="M2926 494a4 4 0 0 1-1-7 5 5 0 0 1 8-2 4 4 0 0 1 6 2 4 4 0 0 1-1 7z" fill="#1b96e8" />
    <Port x={3079} y={486} />
    <StopNode cx={3100} cy={487} />

    {/* sql */}
    <Port x={2655} y={607} />
    <rect x="2663" y="595" width="28" height="27" fill="#10202c" />
    <rect x="2663" y="595" width="28" height="4" fill="#2a7cc0" />
    <path d="M2667 603h18M2667 607h12" stroke="#5fae5f" />
    <path d="M2682 610l9 6-9 6z" fill="#4fb34a" />
    <Port x={2806} y={607} />
    <StopNode cx={2827} cy={607} />

    {/* lower branch */}
    <MapNode x={2797} y={654} />
    <Port x={2927} y={668} />
    <DiskNode x={2934} y={654} />
    <Port x={3094} y={669} />
    <StopNode cx={3115} cy={669} />

    {/* sub process */}
    <Port x={2579} y={788} />
    <circle cx="2596" cy="793" r="7" fill="#a8a9c8" stroke="#a8a9c8" strokeWidth="5" strokeDasharray="2.5 2" />
    <circle cx="2607" cy="782" r="5" fill="#9a9bbd" stroke="#9a9bbd" strokeWidth="4" strokeDasharray="2 2" />

    {/* mouse pointer */}
    <path d="M3178 672v17l4-4 3 7 3-1-3-7h6z" fill="#fff" stroke="#111" />
  </svg>
);

const diagramLabels = [
  { text: 'Start - No Data', cls: 'left-[65px] top-[143px]' },
  { text: 'Branch', cls: 'left-[171px] top-[159px]' },
  { text: '1', cls: 'left-[225px] top-[66px]' },
  { text: '2', cls: 'left-[256px] top-[187px]' },
  { text: '3', cls: 'left-[180px] top-[369px]' },
  { text: 'Disk', cls: 'left-[247px] top-[113px]' },
  { text: 'Conn_Disk', cls: 'left-[247px] top-[129px]', teal: true },
  { text: 'FF to SF Disk Connector', cls: 'left-[247px] top-[146px]', teal: true },
  { text: 'Operation', cls: 'left-[247px] top-[162px]', teal: true },
  { text: 'Account FF to SF Map', cls: 'left-[367px] top-[113px]', teal: true },
  { text: 'Salesforce', cls: 'left-[534px] top-[113px]' },
  { text: 'Salesforce Connection', cls: 'left-[534px] top-[129px]', teal: true },
  { text: 'SF Account UPSERT Operation', cls: 'left-[534px] top-[146px]', teal: true },
  { text: 'End and continue', cls: 'left-[699px] top-[113px]' },
  { text: 'SQL Statement', cls: 'left-[277px] top-[234px]' },
  { text: 'End and continue', cls: 'left-[428px] top-[234px]' },
  { text: 'SF to DB Account Map', cls: 'left-[413px] top-[294px]', teal: true },
  { text: 'Database', cls: 'left-[549px] top-[294px]' },
  { text: 'OracleDB', cls: 'left-[549px] top-[311px]', teal: true },
  { text: 'Customer Insert Operation', cls: 'left-[549px] top-[328px]', teal: true },
  { text: 'End and continue', cls: 'left-[715px] top-[294px]' },
  { text: 'Account Call process', cls: 'left-[201px] top-[415px]', teal: true },
];

const Canvas = () => (
  <div className="flex h-[467px] w-[1168px] flex-col bg-[#f3f3f3]">
    <div className="flex h-[440px]">
      <div className="relative h-[440px] w-[1148px] overflow-hidden bg-white bg-[radial-gradient(#d4d4d4_1px,transparent_1px)] bg-[size:10px_10px] text-[12px] leading-[16px]">
        <Diagram />
        {diagramLabels.map((l) => (
          <span key={l.text + l.cls} className={`absolute whitespace-nowrap ${l.cls} ${l.teal ? 'text-[#44829a]' : 'text-[#4c5358]'}`}>
            {l.text}
          </span>
        ))}
      </div>
      <div className="flex w-[20px] flex-col items-center pt-[6px]">
        <span className="text-[8px] leading-[8px] text-[#9a9a9a]">▲</span>
        <span className="mt-[5px] h-[267px] w-[16px] bg-[#bdbdbd]" />
        <span className="mt-[132px] text-[8px] leading-[8px] text-[#444]">▼</span>
      </div>
    </div>
    <div className="flex h-[15px] w-[1148px] items-center pl-[5px]">
      <span className="text-[8px] text-[#8a8a8a]">◀</span>
      <span className="ml-[8px] h-[15px] w-[1098px] bg-[#bdbdbd]" />
      <span className="ml-[15px] text-[8px] text-[#444]">▶</span>
    </div>
  </div>
);

const ProcessPanel = () => (
  <div className="flex h-[572px] flex-col border-x border-[#dcdcdc] bg-white">
    {/* title */}
    <div className="flex h-[46px] items-center pl-[15px] pt-[4px]">
      <span className="text-[20px] text-[#2f3a41]">FF to Salesforce Upsert Process</span>
      <span className="ml-[5px] text-[14.5px] text-[#5f6a72]">- Process</span>
      <Info size={16} className="ml-[3px] text-[#1f7a99]" />
      <Folder size={12} fill="#0d6f8c" className="ml-[24px] text-[#0d6f8c]" />
      <span className="ml-[4px] border-b border-[#1f7a99] text-[13.5px] leading-[18px] text-[#2a7f9e]">Folder</span>
      <Pencil size={11} fill="#0d6f8c" className="ml-[18px] text-[#0d6f8c]" />
      <span className="ml-[5px] border-b border-[#1f7a99] text-[13.5px] leading-[18px] text-[#2a7f9e]">Add Description</span>
      <div className="ml-auto mb-[5px] flex h-[24px] w-[191px] items-center justify-center border border-[#023a5e] text-[12.5px] font-semibold text-[#37444d]">
        Create Packaged Component
      </div>
      <div className="mb-[5px] ml-[10px] mr-[12px] flex h-[24px] w-[61px] items-center justify-center bg-[#023a5e] text-[12.5px] font-semibold text-white">
        Test
      </div>
    </div>
    {/* action links */}
    <div className="flex h-[19px] items-start gap-[18px] border-b-2 border-[#dedede] pl-[15px] text-[13px] text-[#2f3a41]">
      {['Options', 'Extensions', 'Add Note', 'Show Navigation', 'Arrange'].map((l) => (
        <span key={l} className="h-[17px] border-b border-[#333] leading-[16px]">{l}</span>
      ))}
    </div>
    <div className="flex h-[467px]">
      <Palette />
      <CanvasStrip />
      <Canvas />
    </div>
    {/* save bar */}
    <div className="flex h-[38px] items-center border-t-2 border-[#dedede] pl-[11px] text-[13px]">
      <div className="flex h-[24px] w-[61px] items-center justify-center bg-[#023a5e] font-semibold text-white">Save</div>
      <div className="ml-[12px] flex h-[24px] w-[110px] items-center justify-center bg-[#023a5e] font-semibold text-white">Save and Close</div>
      <div className="ml-[13px] flex h-[24px] w-[60px] items-center justify-center border border-[#333] text-[#44505a]">Close</div>
      <span className="ml-[14px] w-[324px] whitespace-nowrap text-[12.5px] text-[#5f6a72]">Previous Save on 11 Jan 2022 at 01:29:03 PM UTC+5:30</span>
      <span className="border-b border-[#1f7a99] leading-[18px] text-[#2a7f9e]">Revert</span>
      <History size={13} className="ml-auto text-[#1f7a99]" />
      <span className="ml-[6px] mr-[4px] text-[#3f8aa8]">Revision History</span>
    </div>
  </div>
);

const dimTasks = [
  { label: 'Fil...', icon: 14 },
  { label: 'A...', pdf: true },
  { label: 'C:...', icon: 6 },
  { label: 'P...', icon: 16 },
  { label: 'S...', icon: 9 },
  { label: 'Tr...', icon: 13 },
  { label: 'pa...', tile: true },
  { label: 'M...', icon: 10 },
];

/* the recorded desktop's taskbar, it sits under the player controls */
const RecordedTaskbar = () => (
  <div className="flex h-[48px] items-center bg-gradient-to-r from-[#4e1c23] from-70% to-[#274e5a] to-85% text-[15px] text-white">
    <div className="flex h-full w-[57px] items-center justify-center">
      <WinLogo className="h-[20px] w-[20px]" />
    </div>
    <div className="flex h-full w-[405px] items-center bg-[#f3f3f3] pl-[16px] text-[#444]">
      <Search size={20} className="mr-[15px] -scale-x-100" />
      <span className="text-[16px]">Type here to search</span>
    </div>
    <div className="ml-[33px] flex h-full">
      {dimTasks.map((t) => (
        <div key={t.label} className="relative flex w-[72px] items-center pl-[3px]">
          <span className="flex w-[24px] justify-center">
            {t.icon !== undefined && <svg viewBox="0 0 32 32" className="h-[24px] w-[24px]">{appIcons[t.icon]}</svg>}
            {t.pdf && <span className="flex h-[24px] w-[18px] items-end justify-center bg-white text-[7px] font-bold text-[#c0202a]">10</span>}
            {t.tile && <span className="h-[24px] w-[18px] skew-y-12 bg-[#8fd0ea]" />}
          </span>
          <span className="ml-[7px]">{t.label}</span>
          <span className="absolute bottom-0 left-0 h-[2px] w-[68px] bg-[#76b9ed]" />
        </div>
      ))}
    </div>
    <div className="flex w-[46px] justify-center">
      <span className="relative flex h-[26px] w-[22px] items-center justify-center rounded-full bg-[#3aa0e0] font-bold">?</span>
    </div>
    <div className="ml-[24px] h-[26px] w-[24px] rounded-full bg-gradient-to-b from-[#f0c23c] to-[#9ed0ee]" />
    <span className="ml-[12px] w-[45px] text-[#d8d8d8]">28°C</span>
    <span className="ml-[4px] flex w-[29px] justify-center"><ChevronUp size={18} /></span>
    <span className="flex w-[29px] justify-center"><Cloud size={18} fill="#fff" /></span>
    <span className="flex w-[29px] justify-center"><Video size={18} /></span>
    <span className="flex w-[29px] justify-center"><Mic size={20} /></span>
    <span className="flex w-[29px] justify-center"><PictureInPicture2 size={18} /></span>
    <span className="flex w-[29px] justify-center"><Copy size={16} /></span>
    <span className="flex w-[29px] justify-center"><Wifi size={18} /></span>
    <span className="ml-[2px] w-[28px] text-[12px]">ENG</span>
    <div className="ml-[6px] w-[90px] text-center text-[14px] leading-[22px]">
      <div>17:12</div>
      <div>11-01-2022</div>
    </div>
    <span className="flex w-[40px] justify-center"><MessageSquare size={20} fill="#fff" /></span>
  </div>
);

const BoomiBrowser = () => (
  <div className="mt-[18px] flex h-[906px] w-[1612px] flex-col blur-[0.35px]">
    <ChromeBar />
    <ChromeToolbar />
    <BookmarkBar />
    <BoomiNav />
    <SubNav />
    <div className="flex h-[606px] border-t-2 border-[#e2e2e2] bg-[#f7f7f7]">
      <ComponentTree />
      <SideStrip />
      <div className="flex-1 pl-[9px] pr-[10px]">
        <BuildTabs />
        <ProcessPanel />
      </div>
    </div>
    <div className="flex h-[24px] items-center justify-end border-t border-b-2 border-t-[#dedede] border-b-[#444] bg-[#f6f6f6] pr-[16px] text-[12px] text-[#4c5358]">
      <span className="border-b border-[#333] leading-[16px]">Platform Status &amp; Announcements</span>
      <span className="mx-[9px] h-[18px] w-px bg-[#c5c5c5]" />
      <span>© Copyright 2022 Boomi, Inc.</span>
      <span className="mx-[9px] h-[18px] w-px bg-[#c5c5c5]" />
      <span className="border-b border-[#333] leading-[16px]">Privacy</span>
    </div>
    <RecordedTaskbar />
  </div>
);

/* ---------- participants column ---------- */

const participants = [
  { initials: 'PS', name: 'Pritismita Swain', circle: 'bg-[#d9ebf0]', ink: 'text-[#2d6a72]', tile: true },
  { initials: 'PV', name: 'Pavan Kumar Veeraballi', circle: 'bg-[#fdecc8]', ink: 'text-[#7f5a0e]' },
  { initials: 'HA', name: 'Hritik Kumar Agarwal', circle: 'bg-[#fadcd2]', ink: 'text-[#823f30]' },
  { initials: 'AL', name: 'Aditya Lenka', circle: 'bg-[#d6d8ea]', ink: 'text-[#2a2a60]' },
  { initials: 'SJ', name: 'sanat jena (Guest)', circle: 'bg-[#e8cfd2]', ink: 'text-[#5e1f20]', tile: true },
];

const Participants = () => (
  <div className="ml-[23px] w-[189px] font-['Open_Sans',sans-serif]">
    {participants.map((p) => (
      <div key={p.initials} className={`h-[188.75px] px-[20px] pt-[20px] ${p.tile ? 'bg-[#373640]' : ''}`}>
        <div className={`flex h-[150px] w-[150px] items-center justify-center rounded-full text-[58px] ${p.circle} ${p.ink}`}>
          {p.initials}
        </div>
        <div className="-ml-[9px] mt-[1px] whitespace-nowrap text-[11.5px] leading-[16px] text-[#e8e8e8]">{p.name}</div>
      </div>
    ))}
  </div>
);

/* ---------- player overlay ---------- */

const Ctl = ({ children }: { children: React.ReactNode }) => (
  <span className="flex w-[44px] justify-center">{children}</span>
);

const PlayerControls = () => (
  <div className="absolute inset-x-0 bottom-0 h-[116px] bg-[#1c1c1c]/72 font-['Open_Sans',sans-serif] text-white">
    <div className="flex h-[32px] items-center pl-[16px] pr-[17px] text-[12px]">
      <span className="w-[61px]">00:10:57</span>
      <span className="h-[4px] w-[290px] rounded-l-full bg-[#ff8133]" />
      <span className="flex h-[20px] w-[20px] items-center justify-center rounded-full bg-[#4a4a4a]">
        <span className="h-[12px] w-[12px] rounded-full bg-[#ff8133]" />
      </span>
      <span className="h-[4px] w-[1455px] rounded-r-full bg-[#c8c8c8]/80" />
      <span className="ml-auto">00:54:56</span>
    </div>
    <div className="flex h-[84px] items-center pl-[15px]">
      <span className="w-[784px] text-[20px] font-semibold">Dell Boomi Training 5</span>
      <Ctl>
        <span className="relative">
          <Shuffle size={20} strokeWidth={1.5} />
          <span className="absolute left-[9px] top-[-2px] h-[24px] w-px -rotate-45 bg-white" />
        </span>
      </Ctl>
      <Ctl><SkipBack size={20} fill="#fff" strokeWidth={1.5} /></Ctl>
      <Ctl>
        <span className="relative flex h-[28px] w-[20px] flex-col items-center">
          <RotateCcw size={14} strokeWidth={1.6} />
          <span className="text-[11px] leading-[11px]">10</span>
        </span>
      </Ctl>
      <span className="flex w-[58px] justify-center">
        <svg viewBox="0 0 48 48" className="h-[48px] w-[48px]">
          <defs>
            <linearGradient id="pause-ring" x1="0.1" y1="0" x2="0.7" y2="1">
              <stop offset="0" stopColor="#f5893a" />
              <stop offset="1" stopColor="#9a3fb0" />
            </linearGradient>
          </defs>
          <circle cx="24" cy="24" r="22" fill="#1a1a1a" stroke="url(#pause-ring)" strokeWidth="3" />
          <rect x="15" y="13" width="7" height="22" rx="2" fill="#fff" />
          <rect x="27" y="13" width="7" height="22" rx="2" fill="#fff" />
        </svg>
      </span>
      <Ctl>
        <span className="relative flex h-[28px] w-[20px] flex-col items-center">
          <RotateCw size={14} strokeWidth={1.6} />
          <span className="text-[11px] leading-[11px]">30</span>
        </span>
      </Ctl>
      <Ctl><SkipForward size={20} fill="#8a8a8a" className="text-[#8a8a8a]" strokeWidth={1.5} /></Ctl>
      <Ctl>
        <span className="relative">
          <Repeat size={20} strokeWidth={1.5} />
          <span className="absolute left-[9px] top-[-2px] h-[24px] w-px -rotate-45 bg-white" />
        </span>
      </Ctl>
      <div className="ml-auto flex">
        <Ctl><Subtitles size={18} strokeWidth={1.5} /></Ctl>
        <Ctl><Volume1 size={20} strokeWidth={1.5} /></Ctl>
        <Ctl><Maximize2 size={18} strokeWidth={1.3} /></Ctl>
        <Ctl><PictureInPicture2 size={18} strokeWidth={1.3} /></Ctl>
        <Ctl><Ellipsis size={18} /></Ctl>
      </div>
    </div>
  </div>
);

const MediaPlayer = () => (
  <div className="flex h-[1080px] w-[1920px] flex-col bg-black">
    <div className="flex h-[32px] shrink-0 items-center bg-[#181818] pl-[16px] font-['Open_Sans',sans-serif] text-[13px] text-white">
      <House size={16} strokeWidth={1.4} />
      <MediaLogo id="title-logo" className="ml-[27px] h-[20px] w-[18px]" />
      <span className="ml-[11px]">Media Player</span>
      <div className="ml-auto flex">
        <span className="flex w-[46px] justify-center"><Minus size={14} strokeWidth={1.4} /></span>
        <span className="flex w-[46px] justify-center"><Copy size={13} strokeWidth={1.4} className="-scale-x-100" /></span>
        <span className="flex w-[46px] justify-center"><X size={16} strokeWidth={1.2} /></span>
      </div>
    </div>

    <div className="relative flex h-[1008px] items-start overflow-hidden pl-[35px] pt-[16px] font-['Open_Sans',sans-serif]">
      <BoomiBrowser />
      <Participants />
      <PlayerControls />
    </div>

    <PlayerTaskbar />
  </div>
);

export default function App() {
  return (
    <div className="flex h-[1080px] w-[3840px] overflow-hidden">
      <Explorer />
      <MediaPlayer />
    </div>
  );
}
